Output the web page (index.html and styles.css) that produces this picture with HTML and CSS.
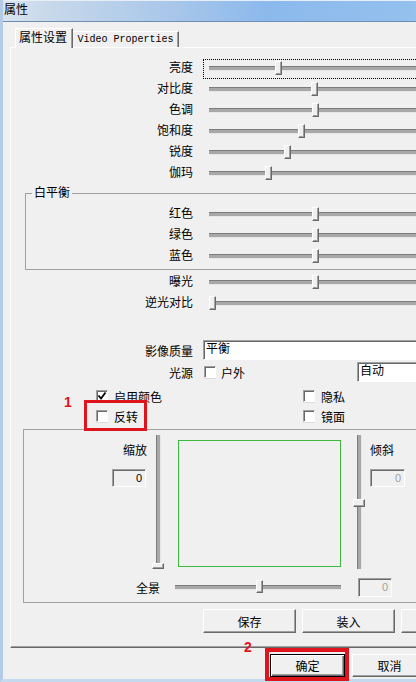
FILE: index.html
```html
<!DOCTYPE html>
<html lang="zh-CN">
<head>
  <meta charset="UTF-8">
  <meta name="viewport" content="width=device-width, initial-scale=1.0">
  <title>属性</title>
  <link rel="stylesheet" href="styles.css">
</head>
<body>
  <div class="window">
    <div class="titlebar">属性</div>

    <div class="dialog">
      <div class="tabs">
        <div class="tab active">属性设置</div>
        <div class="tab latin">Video Properties</div>
      </div>

      <div class="panel">
        <div class="row">
          <span class="label">亮度</span>
          <div class="slider focused"><span class="thumb" style="left:72px"></span></div>
        </div>
        <div class="row">
          <span class="label">对比度</span>
          <div class="slider"><span class="thumb" style="left:108px"></span></div>
        </div>
        <div class="row">
          <span class="label">色调</span>
          <div class="slider"><span class="thumb" style="left:109px"></span></div>
        </div>
        <div class="row">
          <span class="label">饱和度</span>
          <div class="slider"><span class="thumb" style="left:95px"></span></div>
        </div>
        <div class="row">
          <span class="label">锐度</span>
          <div class="slider"><span class="thumb" style="left:81px"></span></div>
        </div>
        <div class="row">
          <span class="label">伽玛</span>
          <div class="slider"><span class="thumb" style="left:62px"></span></div>
        </div>

        <fieldset class="group white-balance">
          <legend>白平衡</legend>
          <div class="row">
            <span class="label">红色</span>
            <div class="slider"><span class="thumb" style="left:109px"></span></div>
          </div>
          <div class="row">
            <span class="label">绿色</span>
            <div class="slider"><span class="thumb" style="left:109px"></span></div>
          </div>
          <div class="row">
            <span class="label">蓝色</span>
            <div class="slider"><span class="thumb" style="left:109px"></span></div>
          </div>
        </fieldset>

        <div class="exposure">
          <div class="row">
            <span class="label">曝光</span>
            <div class="slider"><span class="thumb" style="left:109px"></span></div>
          </div>
          <div class="row">
            <span class="label">逆光对比</span>
            <div class="slider"><span class="thumb" style="left:6px"></span></div>
          </div>
        </div>

        <div class="field-row quality">
          <span class="label">影像质量</span>
          <div class="edit">平衡</div>
        </div>
        <div class="field-row source">
          <span class="label">光源</span>
          <label class="check outdoor"><span class="box"></span>户外</label>
          <div class="edit combo">自动</div>
        </div>

        <div class="checks">
          <label class="check">
            <span class="box">
              <svg width="10" height="10" viewBox="0 0 10 10"><path d="M1.5 4.5 L4 7.5 L8.5 1.5" fill="none" stroke="#000" stroke-width="1.8"/></svg>
            </span>启用颜色
          </label>
          <label class="check"><span class="box"></span>隐私</label>
          <label class="check"><span class="box"></span>反转</label>
          <label class="check"><span class="box"></span>镜面</label>
        </div>

        <div class="group ptz">
          <div class="ptz-top">
            <div class="side zoom">
              <span>缩放</span>
              <div class="num">0</div>
            </div>
            <div class="vslider zoom-slider"><span class="vthumb" style="top:128px"></span></div>
            <div class="preview"></div>
            <div class="vslider tilt-slider"><span class="vthumb tall" style="top:64px"></span></div>
            <div class="side tilt">
              <span>倾斜</span>
              <div class="num disabled">0</div>
            </div>
          </div>
          <div class="ptz-bottom">
            <span class="pan-label">全景</span>
            <div class="slider pan"><span class="thumb" style="left:81px"></span></div>
            <div class="num disabled">0</div>
          </div>
        </div>

        <div class="panel-buttons">
          <button class="button">保存</button>
          <button class="button">装入</button>
          <button class="button"></button>
        </div>
      </div>

      <div class="footer">
        <button class="button default">确定</button>
        <button class="button">取消</button>
      </div>
    </div>

    <!-- red markup drawn on top of the screenshot -->
    <span class="mark mark-1">1</span>
    <span class="mark-box box-1"></span>
    <span class="mark mark-2">2</span>
    <span class="mark-box box-2"></span>
  </div>
</body>
</html>
```

FILE: styles.css
```css
:root {
  --face: #f0f0f0;
  --shadow: #a0a0a0;
  --dark: #696969;
  --light: #ffffff;
  --red: #e0141c;
}

* {
  margin: 0;
  padding: 0;
  box-sizing: border-box;
}

html, body {
  width: 416px;
  height: 682px;
  overflow: hidden;
}

body {
  font-family: "Liberation Sans", "Noto Sans CJK SC", sans-serif;
  font-size: 12px;
  color: #000;
  background-color: var(--face);
}

.window {
  position: relative;
  width: 480px;
  height: 682px;
  border-left: 3px solid #b3cbe6;
  border-bottom: 3px solid #c4d8ee;
  background-color: var(--face);
}

.titlebar {
  height: 22px;
  padding-left: 1px;
  line-height: 18px;
  border-top: 1px solid #e6eef7;
  border-bottom: 1px solid #6f8db2;
  background: linear-gradient(to right, #d9e3ee 0, #c7d8ea 10%, #a9c7ea 35%, #8cb9ec 55%, #94c0ee 85%, #a8cdf1 100%);
}

.dialog {
  padding: 6px 0 0 7px;
}

/* tabs */
.tabs {
  display: flex;
  align-items: flex-end;
  height: 19px;
  padding-left: 5px;
}

.tab {
  background-color: var(--face);
  border-top: 1px solid var(--light);
  border-right: 1px solid var(--dark);
  box-shadow: inset -1px 0 0 var(--shadow);
}

.tab.active {
  position: relative;
  z-index: 1;
  width: 58px;
  height: 20px;
  margin-bottom: -1px;
  padding: 1px 0 0 3px;
  line-height: 17px;
  border-left: 1px solid var(--light);
}

.tab.latin {
  width: 106px;
  height: 16px;
  line-height: 16px;
  text-align: center;
  font-family: "Liberation Mono", monospace;
  font-size: 10px;
}

.panel {
  width: 460px;
  padding: 10px 0 14px 0;
  border-top: 1px solid var(--light);
  border-left: 1px solid var(--light);
  border-bottom: 1px solid var(--dark);
  box-shadow: inset 0 -1px 0 var(--shadow);
}

/* slider rows */
.row {
  display: grid;
  grid-template-columns: 182px 1fr;
  column-gap: 10px;
  height: 21px;
  line-height: 21px;
}

.label {
  text-align: right;
}

.slider {
  position: relative;
  height: 21px;
}

.slider::before {
  content: "";
  position: absolute;
  left: 6px;
  right: 0;
  top: 8px;
  height: 3px;
  background-color: #a8a8a8;
  border-top: 1px solid #7c7c7c;
  border-bottom: 1px solid #e6e6e6;
}

.slider.focused::after {
  content: "";
  position: absolute;
  left: 0;
  right: 0;
  top: 1px;
  bottom: 0;
  border: 1px dotted #000;
}

.thumb {
  position: absolute;
  top: 3px;
  width: 7px;
  height: 14px;
  background-color: var(--face);
  border-top: 1px solid var(--light);
  border-left: 1px solid var(--light);
  border-right: 1px solid var(--dark);
  border-bottom: 1px solid var(--dark);
  box-shadow: inset -1px -1px 0 var(--shadow);
}

/* group boxes */
.group {
  border: 1px solid var(--shadow);
}

.white-balance {
  margin: 2px 0 0 14px;
  padding: 4px 0 2px 0;
}

.white-balance legend {
  margin-left: 6px;
  padding: 0 2px;
  line-height: 14px;
}

.white-balance .row {
  grid-template-columns: 167px 1fr;
}

.exposure {
  margin-top: 2px;
}

/* edit fields */
.field-row {
  display: flex;
  align-items: center;
  height: 20px;
}

.field-row .label {
  width: 182px;
  flex-shrink: 0;
}

.quality {
  margin-top: 26px;
}

.source {
  margin-top: 2px;
}

.edit {
  height: 20px;
  flex: 1;
  padding-left: 2px;
  line-height: 17px;
  background-color: var(--light);
  border-top: 1px solid var(--shadow);
  border-left: 1px solid var(--shadow);
  border-bottom: 1px solid var(--light);
  border-right: 1px solid var(--light);
  box-shadow: inset 1px 1px 0 var(--dark);
}

.quality .edit {
  margin-left: 10px;
}

/* check boxes */
.check {
  display: flex;
  align-items: center;
  gap: 6px;
}

.box {
  display: flex;
  align-items: center;
  justify-content: center;
  width: 12px;
  height: 12px;
  background-color: var(--light);
  border-top: 1px solid var(--shadow);
  border-left: 1px solid var(--shadow);
  border-bottom: 1px solid var(--light);
  border-right: 1px solid var(--light);
  box-shadow: inset 1px 1px 0 var(--dark), 0 1px 0 #dcdcdc;
}

.outdoor {
  flex-shrink: 0;
  width: 153px;
  margin-left: 11px;
  gap: 5px;
}

.checks {
  display: grid;
  grid-template-columns: 207px 1fr;
  grid-auto-rows: 20px;
  margin-top: 4px;
  padding-left: 85px;
}

/* pan / tilt / zoom box */
.ptz {
  margin: 3px 0 0 12px;
  padding: 5px 0;
}

.ptz-top {
  display: flex;
  height: 134px;
}

.side {
  display: flex;
  flex-direction: column;
  flex-shrink: 0;
}

.side span {
  margin-top: 9px;
  line-height: 14px;
}

.side .num {
  margin-top: 11px;
}

.zoom {
  width: 123px;
  align-items: flex-end;
}

.zoom .num {
  margin-right: 1px;
}

.tilt {
  margin-left: 4px;
}

.tilt .num {
  width: 35px;
}

.num {
  flex-shrink: 0;
  width: 34px;
  height: 18px;
  padding-right: 3px;
  text-align: right;
  line-height: 16px;
  font-size: 11px;
  border-top: 1px solid var(--shadow);
  border-left: 1px solid var(--shadow);
  border-bottom: 1px solid var(--light);
  border-right: 1px solid var(--light);
  box-shadow: inset 1px 1px 0 var(--dark);
}

.num.disabled {
  color: #a0a0a0;
}

.vslider {
  position: relative;
  flex-shrink: 0;
  width: 15px;
  height: 134px;
}

.vslider::before {
  content: "";
  position: absolute;
  left: 6px;
  top: 0;
  bottom: 0;
  width: 3px;
  background-color: #a8a8a8;
  border-left: 1px solid #7c7c7c;
  border-right: 1px solid #e6e6e6;
}

.zoom-slider {
  margin-left: 3px;
}

.tilt-slider {
  margin-left: 10px;
}

.vthumb {
  position: absolute;
  left: 2px;
  width: 12px;
  height: 6px;
  background-color: var(--face);
  border-top: 1px solid var(--light);
  border-left: 1px solid var(--light);
  border-right: 1px solid var(--dark);
  border-bottom: 1px solid var(--dark);
  box-shadow: inset -1px -1px 0 var(--shadow);
}

.vthumb.tall {
  height: 8px;
}

.preview {
  flex-shrink: 0;
  width: 163px;
  height: 127px;
  margin: 5px 0 0 13px;
  border: 1px solid #3cb83c;
}

.ptz-bottom {
  display: flex;
  align-items: center;
  height: 19px;
  margin-top: 9px;
}

.pan-label {
  flex-shrink: 0;
  width: 136px;
  text-align: right;
}

.slider.pan {
  flex-shrink: 0;
  width: 166px;
  height: 19px;
  margin-left: 15px;
}

.slider.pan::before {
  left: 0;
  top: 7px;
}

.slider.pan .thumb {
  top: 2px;
  height: 13px;
}

.ptz-bottom .num {
  height: 19px;
  margin-left: 17px;
}

/* buttons */
.button {
  flex-shrink: 0;
  width: 93px;
  height: 24px;
  font: inherit;
  color: #000;
  background-color: var(--face);
  border-top: 1px solid var(--light);
  border-left: 1px solid var(--light);
  border-right: 1px solid var(--dark);
  border-bottom: 1px solid var(--dark);
  box-shadow: inset -1px -1px 0 var(--shadow);
}

.panel-buttons {
  display: flex;
  gap: 6px;
  margin-top: 6px;
  padding-left: 192px;
}

.footer {
  display: flex;
  gap: 7px;
  padding: 6px 0 0 260px;
}

.footer .button {
  width: 75px;
  height: 23px;
}

.footer .button.default {
  border: 1px solid #000;
  box-shadow: inset 1px 1px 0 var(--light), inset -1px -1px 0 var(--dark), inset -2px -2px 0 var(--shadow);
}

/* red annotations */
.mark {
  position: absolute;
  font-family: "Liberation Sans", sans-serif;
  font-size: 14px;
  font-weight: bold;
  line-height: 14px;
  color: var(--red);
}

.mark-1 {
  left: 61px;
  top: 395px;
}

.mark-2 {
  left: 241px;
  top: 640px;
}

.mark-box {
  position: absolute;
  border: 3px solid var(--red);
}

.box-1 {
  left: 81px;
  top: 400px;
  width: 63px;
  height: 31px;
}

.box-2 {
  left: 262px;
  top: 648px;
  width: 84px;
  height: 33px;
  border-width: 4px;
}
```
